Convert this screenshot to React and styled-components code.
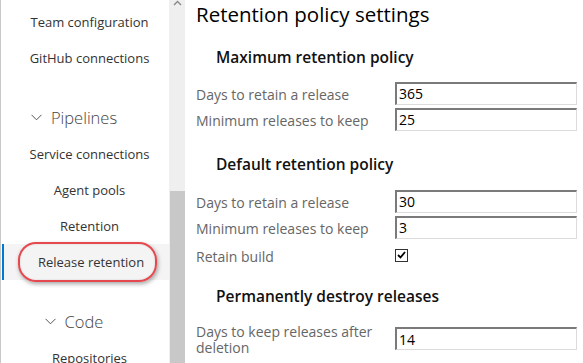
import React from 'react';
import styled, { createGlobalStyle } from 'styled-components';

const GlobalStyle = createGlobalStyle`
  html, body {
    margin: 0;
    padding: 0;
    background: #fff;
    overflow: hidden;
  }
  body {
    font-family: "Open Sans", "Noto Sans", sans-serif;
  }
`;

const Page = styled.div`
  display: flex;
  width: 583px;
  height: 363px;
  overflow: hidden;
  background: #fff;
`;

// left nav
const Sidebar = styled.nav`
  position: relative;
  width: 169px;
  flex-shrink: 0;
  border-left: 1px solid #c8c8c8;
  display: flex;
  flex-direction: column;
  padding-top: 4px;
  box-sizing: border-box;
`;

const NavItem = styled.div`
  position: relative;
  flex-shrink: 0;
  height: 36px;
  display: flex;
  align-items: center;
  justify-content: center;
  padding-left: 9px;
  font-size: 13px;
  color: #333;
  white-space: nowrap;
  background: ${p => (p.$active ? '#f4f4f4' : 'transparent')};
  margin-left: ${p => (p.$active ? '1px' : '0')};
  border-left: ${p => (p.$active ? '2px solid #0078d4' : '0')};
`;

const GroupHeader = styled.div`
  flex-shrink: 0;
  height: 38px;
  margin-top: 22px;
  display: flex;
  align-items: center;
  justify-content: center;
  gap: 9px;
  padding-right: ${p => p.$shift || 0}px;
  font-size: 16.5px;
  font-weight: 300;
  color: #444;
`;

const Callout = styled.div`
  position: absolute;
  left: 14px;
  right: 12px;
  top: -2px;
  bottom: -2px;
  border: 2.5px solid #e5484f;
  border-radius: 18px;
  box-shadow: 1px 2px 4px rgba(0, 0, 0, 0.35), inset 0 0 2px rgba(0, 0, 0, 0.15);
  pointer-events: none;
`;

const Scrollbar = styled.div`
  width: 16px;
  flex-shrink: 0;
  background: #efefef;
  display: flex;
  flex-direction: column;
  align-items: center;
`;

const ScrollArrow = styled.div`
  height: 8px;
  display: flex;
  align-items: flex-start;
  justify-content: center;
`;

const ScrollThumb = styled.div`
  width: 15px;
  margin-left: 1px;
  margin-top: 183px;
  flex: 1;
  background: #c8c8c8;
`;

// main content
const Content = styled.main`
  flex: 1;
  padding-left: 11px;
  padding-right: 5px;
  display: flex;
  flex-direction: column;
`;

const Title = styled.h1`
  margin: 0;
  height: 28px;
  line-height: 28px;
  font-size: 20.5px;
  font-weight: 400;
  color: #000;
  white-space: nowrap;
`;

const SectionTitle = styled.h2`
  margin: 0;
  padding-left: 20px;
  height: 24px;
  line-height: 24px;
  font-size: 15.5px;
  font-weight: 600;
  color: #111;
  white-space: nowrap;
  margin-top: ${p => p.$top}px;
  margin-bottom: ${p => p.$bottom}px;
`;

const Row = styled.div`
  display: grid;
  grid-template-columns: 199px 1fr;
  align-items: center;
  min-height: ${p => p.$h || 26}px;
`;

const Label = styled.label`
  font-size: 14px;
  color: #666;
  line-height: 16px;
  padding-top: 3px;
  padding-right: 18px;
`;

const Field = styled.input`
  box-sizing: border-box;
  width: 182px;
  height: 23px;
  margin: 0;
  padding: 0 2px;
  font-family: "Open Sans", "Noto Sans", sans-serif;
  font-size: 14px;
  color: #000;
  border: 1px solid #dcdcdc;
  border-top: 2px solid #7a7a7a;
  border-left: 2px solid #7a7a7a;
  outline: none;
  background: #fff;
`;

const CheckBox = styled.span`
  display: inline-flex;
  align-items: center;
  justify-content: center;
  width: 11px;
  height: 11px;
  border: 1px solid #333;
  background: #fff;
`;

const Chevron = () => (
  <svg width="11" height="7" viewBox="0 0 11 7">
    <path d="M0.5 0.8 L5.5 5.8 L10.5 0.8" fill="none" stroke="#555" strokeWidth="1" />
  </svg>
);

const fields = {
  max: [
    ['Days to retain a release', '365'],
    ['Minimum releases to keep', '25'],
  ],
  def: [
    ['Days to retain a release', '30'],
    ['Minimum releases to keep', '3'],
  ],
};

const App = () => (
  <>
    <GlobalStyle />
    <Page>
      <Sidebar>
        <NavItem>Team configuration</NavItem>
        <NavItem>GitHub connections</NavItem>
        <GroupHeader $shift={22}>
          <Chevron />
          Pipelines
        </GroupHeader>
        <NavItem>Service connections</NavItem>
        <NavItem>Agent pools</NavItem>
        <NavItem>Retention</NavItem>
        <NavItem $active>
          Release retention
          <Callout />
        </NavItem>
        <GroupHeader $shift={22}>
          <Chevron />
          Code
        </GroupHeader>
        <NavItem>Repositories</NavItem>
      </Sidebar>

      <Scrollbar>
        <ScrollArrow>
          <svg width="9" height="6" viewBox="0 0 9 6">
            <path d="M1 5 L4.5 1.5 L8 5" fill="none" stroke="#888" strokeWidth="1.4" />
          </svg>
        </ScrollArrow>
        <ScrollThumb />
      </Scrollbar>

      <Content>
        <Title>Retention policy settings</Title>
        <SectionTitle $top={17} $bottom={11}>Maximum retention policy</SectionTitle>
        {fields.max.map(([l, v]) => (
          <Row key={l}>
            <Label>{l}</Label>
            <Field defaultValue={v} />
          </Row>
        ))}
        <SectionTitle $top={20} $bottom={12}>Default retention policy</SectionTitle>
        {fields.def.map(([l, v]) => (
          <Row key={l}>
            <Label>{l}</Label>
            <Field defaultValue={v} />
          </Row>
        ))}
        <Row $h={30}>
          <Label>Retain build</Label>
          <CheckBox>
            <svg width="9" height="8" viewBox="0 0 9 8">
              <path d="M1 4 L3.5 6.5 L8 1" fill="none" stroke="#000" strokeWidth="1.8" />
            </svg>
          </CheckBox>
        </Row>
        <SectionTitle $top={14} $bottom={13}>Permanently destroy releases</SectionTitle>
        <Row>
          <Label>Days to keep releases after deletion</Label>
          <Field defaultValue="14" />
        </Row>
      </Content>
    </Page>
  </>
);

export default App;
